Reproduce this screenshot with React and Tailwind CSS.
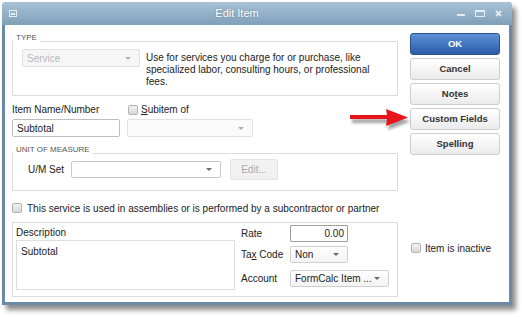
import React from "react";

function Caret({ color = "border-t-[#7a7a7a]" }) {
  return <span className={`w-0 h-0 border-l-[3px] border-r-[3px] border-t-[3px] border-l-transparent border-r-transparent ${color}`} />;
}

function Check() {
  return <span className="block w-[10px] h-[10px] rounded-[2px] border border-[#b3b3b3] bg-linear-to-b from-[#f2f2f2] to-[#d9d9d9]" />;
}

function Combo({ className, text, muted }) {
  return (
    <div className={`flex items-center justify-between rounded-[2px] border pl-[4px] pr-[8px] ${className}`}>
      <span className={muted ? "text-[#b8b8b8]" : "text-[#222]"}>{text}</span>
      <Caret color={muted ? "border-t-[#b0b0b0]" : "border-t-[#6a6a6a]"} />
    </div>
  );
}

function Btn({ children, primary }) {
  return (
    <button
      className={
        primary
          ? "h-[22px] w-full rounded-[3px] border border-[#2a5192] bg-linear-to-b from-[#5d91d8] to-[#2d5ca8] text-[9.5px] font-bold text-white"
          : "h-[22px] w-full rounded-[3px] border border-[#cdcdcd] bg-linear-to-b from-white to-[#ebebeb] text-[9.5px] font-bold text-[#333]"
      }
    >
      {children}
    </button>
  );
}

export default function App() {
  return (
    <div className="relative w-[522px] h-[317px] bg-white pt-[2px] pl-[2px] font-['Liberation_Sans',Arial,sans-serif] text-[10px] text-[#222]">
      <div className="flex w-[510px] h-[303px] flex-col rounded-t-[4px] bg-[#6b8aa4] shadow-[4px_5px_5px_rgba(0,0,0,0.45)]">
        {/* title bar */}
        <div className="flex h-[23px] items-center rounded-t-[4px] bg-linear-to-b from-[#a9c3d7] to-[#7f9fb8] pl-[7px] pr-[10px]">
          <span className="flex w-[8px] h-[7px] items-center justify-center border border-[#e6eef4]">
            <span className="w-[4px] h-[2px] bg-[#e6eef4]" />
          </span>
          <div className="flex-1 text-center text-[11px] text-white [text-shadow:0_0_2px_rgba(60,90,120,0.6)]">Edit Item</div>
          <div className="flex items-center gap-[10px]">
            <span className="mt-[3px] w-[8px] h-[2px] bg-[#e4ecf2]" />
            <span className="w-[10px] h-[7px] border border-t-2 border-[#e4ecf2]" />
            <svg width="7" height="7" viewBox="0 0 7 7">
              <path d="M1 1 L6 6 M6 1 L1 6" stroke="#e4ecf2" strokeWidth="1.8" />
            </svg>
          </div>
        </div>

        {/* body */}
        <div className="mx-[3px] mb-[3px] flex flex-1 bg-white">
          <div className="ml-[7px] flex w-[386px] flex-col pt-[11px]">
            <fieldset className="h-[60px] border border-[#dcdcdc]">
              <legend className="px-[3px] text-[8px] leading-[10px] text-[#555]">
                <span className="relative -top-[3px]">TYPE</span>
              </legend>
              <div className="flex pl-[9px] pt-[3px]">
                <Combo className="w-[118px] h-[18px] border-[#e2e2e2] bg-[#f6f6f6]" text="Service" muted />
                <p className="ml-[6px] mt-[3px] w-[240px] leading-[12px]">
                  Use for services you charge for or purchase, like specialized labor, consulting hours, or professional fees.
                </p>
              </div>
            </fieldset>

            <div className="mt-[8px] flex">
              <div className="flex w-[108px] flex-col">
                <span className="leading-[12px]">Item Name/Number</span>
                <div className="mt-[3px] flex h-[18px] items-center rounded-[2px] border border-[#bdbdbd] pl-[4px]">Subtotal</div>
              </div>
              <div className="ml-[7px] flex flex-col">
                <div className="flex h-[12px] items-center gap-[3px] pl-[1px]">
                  <Check />
                  <span className="leading-[12px]"><u>S</u>ubitem of</span>
                </div>
                <Combo className="mt-[3px] w-[126px] h-[18px] border-[#e2e2e2] bg-[#fafafa]" text="" muted />
              </div>
            </div>

            <fieldset className="mt-[11px] h-[43px] border border-[#dcdcdc]">
              <legend className="px-[3px] text-[8px] leading-[10px] text-[#555]">
                <span className="relative -top-[3px]">UNIT OF MEASURE</span>
              </legend>
              <div className="flex h-[22px] items-center pl-[15px]">
                <span className="w-[43px]">U/M Set</span>
                <Combo className="w-[150px] h-[17px] border-[#c8c8c8] bg-white" text="" />
                <button className="ml-[9px] h-[21px] w-[48px] rounded-[2px] border border-[#e4e4e4] bg-[#f1f1f1] text-[10px] text-[#a8a8a8]">Edit...</button>
              </div>
            </fieldset>

            <div className="mt-[11px] flex h-[12px] items-center gap-[5px]">
              <Check />
              <span>This service is used in assemblies or is performed by a subcontractor or partner</span>
            </div>

            <fieldset className="mt-[8px] flex h-[75px] border border-[#dcdcdc] pl-[3px]">
              <div className="flex w-[219px] flex-col pt-[4px]">
                <span className="leading-[12px]">Description</span>
                <textarea
                  readOnly
                  defaultValue="Subtotal"
                  className="mt-[1px] h-[50px] resize-none border border-[#dedede] px-[4px] pt-[5px] text-[10px] leading-[12px] outline-none"
                />
              </div>
              <div className="ml-[6px] flex flex-col pt-[2px]">
                <div className="flex h-[17px] items-center">
                  <span className="w-[49px]">Rate</span>
                  <div className="flex h-[17px] w-[58px] items-center justify-end rounded-[1px] border border-[#9d9d9d] pr-[3px]">0.00</div>
                </div>
                <div className="mt-[4px] flex h-[17px] items-center">
                  <span className="w-[49px]">Ta<u>x</u> Code</span>
                  <Combo className="w-[58px] h-[17px] border-[#cfcfcf] bg-linear-to-b from-white to-[#f3f3f3]" text="Non" />
                </div>
                <div className="mt-[7px] flex h-[17px] items-center">
                  <span className="w-[49px]">Account</span>
                  <Combo className="w-[99px] h-[17px] border-[#cfcfcf] bg-linear-to-b from-white to-[#f3f3f3]" text="FormCalc Item ..." />
                </div>
              </div>
            </fieldset>
          </div>

          <div className="ml-[12px] flex w-[90px] flex-col gap-[3px] pt-[8px]">
            <Btn primary>OK</Btn>
            <Btn>Cancel</Btn>
            <Btn>No<u>t</u>es</Btn>
            <Btn>Custom Fields</Btn>
            <Btn>Spelling</Btn>
            <div className="mt-[84px] flex h-[12px] items-center gap-[4px] pl-[1px]">
              <Check />
              <span>Item is inactive</span>
            </div>
          </div>
        </div>
      </div>

      {/* red arrow callout */}
      <svg className="absolute left-[348px] top-[106px]" width="66" height="28" viewBox="0 0 66 28">
        <defs>
          <filter id="blur" x="-20%" y="-50%" width="140%" height="200%">
            <feGaussianBlur stdDeviation="1.5" />
          </filter>
        </defs>
        <path d="M2 9 L39 9 L38 3 L60 11.5 L38 20 L39 13 L2 13 Z" fill="#555" opacity="0.55" filter="url(#blur)" transform="translate(2 4)" />
        <path d="M2 9 L39 9 L38 3 L60 11.5 L38 20 L39 13 L2 13 Z" fill="#e8141a" />
      </svg>
    </div>
  );
}
